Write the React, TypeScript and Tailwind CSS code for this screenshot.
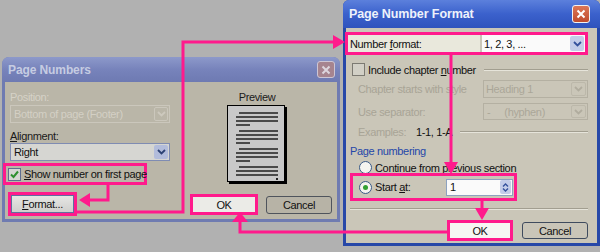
import React from 'react';

const PINK = '#ff1a8c';

function Chevron({ color }: { color: string }) {
  return (
    <svg width="9" height="6" viewBox="0 0 9 6">
      <path d="M1 1 L4.5 4.5 L8 1" stroke={color} strokeWidth="1.8" fill="none" />
    </svg>
  );
}

function XIcon({ color }: { color: string }) {
  return (
    <svg width="10" height="10" viewBox="0 0 10 10">
      <path d="M1.5 1.5 L8.5 8.5 M8.5 1.5 L1.5 8.5" stroke={color} strokeWidth="2" />
    </svg>
  );
}

function Etched({ className }: { className: string }) {
  return <div className={'h-[2px] border-t border-b border-t-[#a29e90] border-b-[#e6e4da] ' + className} />;
}

function PageLine({ kind }: { kind: 'indent' | 'full' | 'short' }) {
  if (kind === 'indent') return <div className="h-[2px] ml-[3px] bg-[#4a4a4a]" />;
  if (kind === 'short') return <div className="h-[2px] w-[14px] bg-[#4a4a4a]" />;
  return <div className="h-[2px] bg-[#4a4a4a]" />;
}

function LeftDialog() {
  return (
    <div className="absolute left-[2px] top-[57px] w-[338px] h-[165px] flex flex-col rounded-t-[7px] bg-[#6f7bb1] overflow-hidden">
      <div className="h-[25px] shrink-0 flex items-center justify-between pl-[6px] pr-[5px] bg-gradient-to-b from-[#8d99ca] via-[#7783bb] to-[#6e7ab2]">
        <span className="font-bold text-[12px] tracking-[-0.1px] text-[#c6cce2]">Page Numbers</span>
        <div className="w-[18px] h-[17px] rounded-[3px] border border-[#cdc6d4] bg-[#a6848f] flex items-center justify-center">
          <XIcon color="#ddd6de" />
        </div>
      </div>
      <div className="flex-1 mx-[3px] mb-[3px] bg-[#bab6a8] flex">
        <div className="w-[165px] pl-[5px] flex flex-col">
          <div className="mt-[9px] h-[12px] text-[#d6d2c7]">Position:</div>
          <div className="mt-[2px] w-[160px] h-[18px] border border-[#cbc7bc] flex items-center justify-between pl-[3px] pr-[1px]">
            <span className="text-[#d4d0c5]">Bottom of page (Footer)</span>
            <div className="w-[14px] h-[14px] rounded-[2px] border border-[#cbc7bc] flex items-center justify-center">
              <Chevron color="#cdc9be" />
            </div>
          </div>
          <div className="mt-[7px] h-[12px] text-[#1a1a1a]">
            <span className="underline">A</span>lignment:
          </div>
          <div className="mt-[1px] w-[160px] h-[18px] border border-[#7f8cb3] bg-[#d6d6d2] flex items-center justify-between pl-[3px] pr-[1px]">
            <span className="text-[#111]">Right</span>
            <div className="w-[14px] h-[14px] rounded-[2px] bg-[#b2bcdb] flex items-center justify-center">
              <Chevron color="#2c4274" />
            </div>
          </div>
          <div className="mt-[2px] -ml-[7px] w-[144px] h-[22px] border-[3px] border-[#ff1a8c] flex items-center pl-[2px]">
            <div className="shrink-0 w-[13px] h-[13px] border border-[#5f6e90] bg-[#d6d6d2] flex items-center justify-center">
              <svg width="11" height="11" viewBox="0 0 11 11">
                <path d="M2 5.5 L4.5 8 L9 2.5" stroke="#2f8f2f" strokeWidth="2" fill="none" />
              </svg>
            </div>
            <span className="ml-[3px] whitespace-nowrap text-[#111]">
              <span className="underline">S</span>how number on first page
            </span>
          </div>
          <div className="mt-[7px] -ml-[2px] w-[69px] h-[24px] border-[3px] border-[#ff1a8c] p-0">
            <div className="w-full h-full border border-[#5f6f9f] bg-gradient-to-b from-[#e6e6e4] to-[#cfcfcc] flex items-center justify-center text-[#111]">
              <span className="whitespace-nowrap">
                <span className="underline">F</span>ormat...
              </span>
            </div>
          </div>
        </div>
        <div className="ml-[20px] w-[142px] flex flex-col">
          <div className="ml-[37px] w-[60px] flex flex-col">
            <div className="mt-[9px] h-[12px] text-center text-[#1a1a1a]">Preview</div>
            <div className="mt-[2px] w-[58px] h-[77px] border border-black bg-[#c8c8c8] shadow-[2px_2px_0_#000] pt-[6px] pl-[8px] pr-[6px] flex flex-col gap-[4px]">
              {[0, 1, 2].map((g) => (
                <div key={g} className="flex flex-col gap-[2px]">
                  <PageLine kind="indent" />
                  <PageLine kind="full" />
                  <PageLine kind="full" />
                  <PageLine kind="short" />
                </div>
              ))}
              <div className="flex flex-col gap-[2px]">
                <PageLine kind="indent" />
                <PageLine kind="full" />
                <PageLine kind="full" />
                <div className="w-[2px] h-[2px] self-end bg-[#222]" />
              </div>
            </div>
          </div>
          <div className="mt-[12px] flex items-center">
            <div className="w-[68px] h-[21px] border-[3px] border-[#ff1a8c]">
              <div className="w-full h-full bg-[#ebebe7] flex items-center justify-center text-[#111]">OK</div>
            </div>
            <div className="ml-[8px] w-[66px] h-[18px] rounded-[3px] border border-[#4f545c] bg-[#b7b3a6] flex items-center justify-center text-[#111]">
              Cancel
            </div>
          </div>
        </div>
      </div>
    </div>
  );
}

function RightDialog() {
  return (
    <div className="absolute left-[343px] top-0 w-[257px] h-[246px] flex flex-col rounded-t-[6px] bg-[#2748a8] overflow-hidden">
      <div className="h-[28px] shrink-0 flex items-center justify-between pl-[6px] pr-[10px] bg-gradient-to-b from-[#5c80dc] via-[#3b61cc] to-[#2f53bd]">
        <span className="font-bold text-[12.5px] tracking-[-0.1px] text-[#eef2fb]">Page Number Format</span>
        <div className="w-[18px] h-[18px] rounded-[3px] border border-[#f2f2f2] bg-gradient-to-b from-[#dc7656] to-[#bf4b2d] flex items-center justify-center">
          <XIcon color="#ffffff" />
        </div>
      </div>
      <div className="flex-1 mx-[3px] mb-[3px] bg-[#cac6b8] flex flex-col text-[#111]">
        <div className="mt-[4px] -ml-[1px] mr-[9px] h-[23px] border-[3px] border-[#ff1a8c] flex">
          <div className="flex-1 bg-[#e9e8dc] flex items-center pl-[2px]">
            <span className="whitespace-nowrap">
              Number <span className="underline">f</span>ormat:
            </span>
          </div>
          <div className="ml-[2px] w-[103px] bg-[#fafafa] flex items-center justify-between pl-[2px] pr-[1px]">
            <span className="whitespace-nowrap">1, 2, 3, ...</span>
            <div className="w-[14px] h-[15px] rounded-[2px] bg-[#c3cce9] flex items-center justify-center">
              <Chevron color="#34509c" />
            </div>
          </div>
        </div>
        <div className="mt-[8px] ml-[6px] mr-[9px] h-[13px] flex items-center">
          <div className="shrink-0 w-[13px] h-[13px] border border-[#7c7a72] bg-[#d2d0c6]" />
          <span className="ml-[3px] whitespace-nowrap">
            Include chapter <span className="underline">n</span>umber
          </span>
          <Etched className="flex-1 ml-[8px]" />
        </div>
        <div className="mt-[4px] ml-[12px] mr-[9px] h-[18px] flex items-center justify-between">
          <span className="whitespace-nowrap text-[#a8a496]">Chapter starts with style</span>
          <div className="w-[105px] h-[18px] border border-[#b4b0a2] flex items-center justify-between pl-[2px] pr-[1px]">
            <span className="text-[#aaa698]">Heading 1</span>
            <div className="w-[15px] h-[14px] rounded-[2px] border border-[#bcb8aa] flex items-center justify-center">
              <Chevron color="#b0ac9e" />
            </div>
          </div>
        </div>
        <div className="mt-[5px] ml-[12px] mr-[9px] h-[17px] flex items-center justify-between">
          <span className="whitespace-nowrap text-[#a8a496]">Use separator:</span>
          <div className="w-[105px] h-[17px] border border-[#b4b0a2] flex items-center justify-between pl-[3px] pr-[1px]">
            <span className="whitespace-nowrap text-[#aaa698]">
              -<span className="ml-[14px]">(hyphen)</span>
            </span>
            <div className="w-[15px] h-[13px] rounded-[2px] border border-[#bcb8aa] flex items-center justify-center">
              <Chevron color="#b0ac9e" />
            </div>
          </div>
        </div>
        <div className="mt-[6px] ml-[12px] mr-[9px] h-[12px] flex items-center">
          <span className="w-[58px] shrink-0 text-[#a8a496]">Examples:</span>
          <span className="whitespace-nowrap">1-1, 1-A</span>
          <Etched className="flex-1 ml-[8px]" />
        </div>
        <div className="mt-[7px] ml-[4px] h-[12px] text-[#2547a8]">Page numbering</div>
        <div className="mt-[4px] ml-[13px] h-[13px] flex items-center">
          <div className="shrink-0 w-[13px] h-[13px] rounded-full border border-[#3a5a86] bg-[#f4f4f0]" />
          <span className="ml-[3px] whitespace-nowrap">
            <span className="underline">C</span>ontinue from previous section
          </span>
        </div>
        <div className="-mt-[1px] ml-[4px] w-[167px] h-[28px] border-[3px] border-[#ff1a8c] flex items-center pl-[6px] pr-[1px]">
          <div className="shrink-0 w-[13px] h-[13px] rounded-full border border-[#3a5a86] bg-[#f4f4f0] flex items-center justify-center">
            <div className="w-[5px] h-[5px] rounded-full bg-[#32a032]" />
          </div>
          <span className="ml-[3px] whitespace-nowrap">
            Start <span className="underline">a</span>t:
          </span>
          <div className="ml-auto w-[67px] h-[17px] border border-[#8da2c0] bg-[#fafafa] flex items-center justify-between pl-[3px] pr-[1px]">
            <span>1</span>
            <div className="w-[11px] h-[14px] rounded-[2px] bg-[#c3cce9] flex flex-col items-center justify-center gap-[1px]">
              <svg width="7" height="4" viewBox="0 0 7 4">
                <path d="M1 3.5 L3.5 1 L6 3.5" stroke="#34509c" strokeWidth="1.4" fill="none" />
              </svg>
              <svg width="7" height="4" viewBox="0 0 7 4">
                <path d="M1 0.5 L3.5 3 L6 0.5" stroke="#34509c" strokeWidth="1.4" fill="none" />
              </svg>
            </div>
          </div>
        </div>
        <Etched className="mt-[7px] ml-[4px] mr-[9px]" />
        <div className="mt-[10px] mr-[9px] flex justify-end items-center">
          <div className="w-[66px] h-[21px] border-[3px] border-[#ff1a8c]">
            <div className="w-full h-full bg-[#f6f6f3] flex items-center justify-center">OK</div>
          </div>
          <div className="ml-[9px] w-[66px] h-[17px] rounded-[3px] border border-[#3f4b5e] bg-[#c9c5b8] flex items-center justify-center">
            Cancel
          </div>
        </div>
      </div>
    </div>
  );
}

function Connectors() {
  return (
    <svg className="absolute left-0 top-0 pointer-events-none" width={600} height={252} viewBox="0 0 600 252">
      <g stroke={PINK} strokeWidth="3" fill="none">
        <path d="M108 185 V200 H88" />
        <path d="M77 212 H183 V42 H334" />
        <path d="M451 55 V163" />
        <path d="M482 201 V209" />
        <path d="M240 221 V232 H448" />
      </g>
      <g fill={PINK}>
        <polygon points="79,200 90,193 90,207" />
        <polygon points="345,42 333,35 333,49" />
        <polygon points="451,174 444,162 458,162" />
        <polygon points="482,220 475,208 489,208" />
        <polygon points="240,212 232,222 248,222" />
      </g>
    </svg>
  );
}

export default function App() {
  return (
    <div className="relative w-[600px] h-[252px] overflow-hidden bg-[#b1b1b1] font-['Liberation_Sans',Arial,sans-serif] text-[11px] tracking-[-0.35px] leading-[12px]">
      <LeftDialog />
      <RightDialog />
      <Connectors />
    </div>
  );
}
